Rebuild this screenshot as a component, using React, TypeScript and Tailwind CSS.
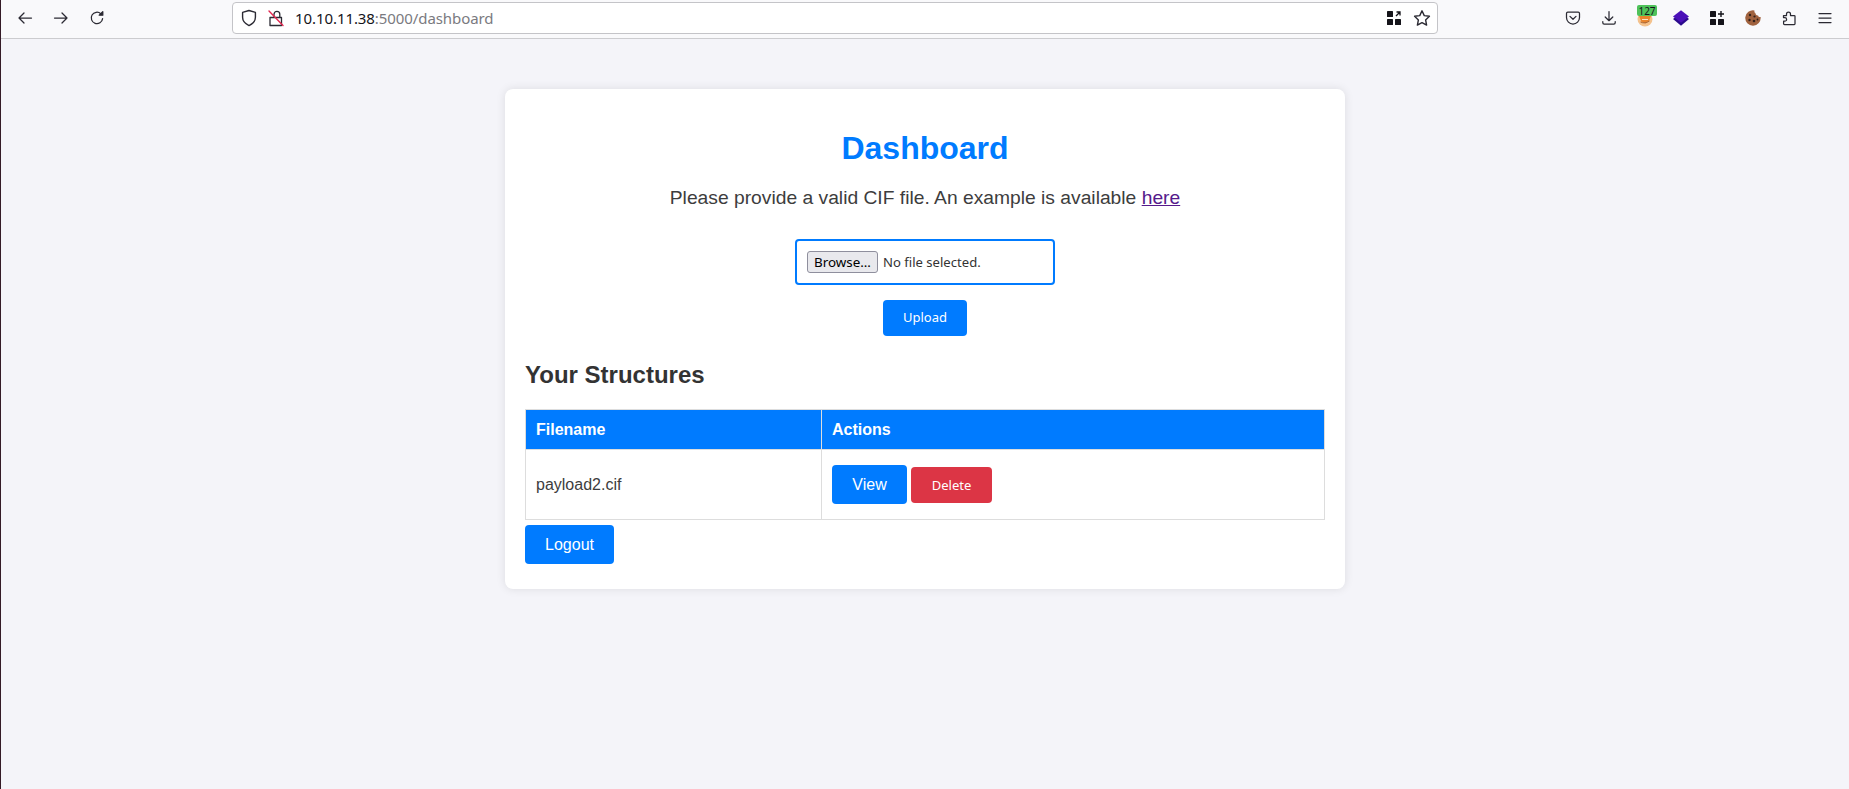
const ui = "font-['Noto_Sans','Open_Sans',sans-serif]";

function Stroke({ children, size = 16 }: { children: React.ReactNode; size?: number }) {
  return (
    <svg width={size} height={size} viewBox="0 0 16 16" fill="none" stroke="#2b2a33" strokeWidth="1.25" strokeLinecap="round" strokeLinejoin="round">
      {children}
    </svg>
  );
}

function Slot({ children }: { children: React.ReactNode }) {
  return <div className="flex h-[36px] w-[36px] shrink-0 items-center justify-center">{children}</div>;
}

function Toolbar() {
  return (
    <div className="flex h-[39px] shrink-0 items-center border-b border-[#cccccf] bg-[#f9f9fb] pb-[2px]">
      <div className="ml-[6px] flex">
        <Slot><Stroke><path d="M14.5 8H2M7 3 2 8l5 5" /></Stroke></Slot>
        <Slot><Stroke><path d="M1.5 8H14M9 3l5 5-5 5" /></Stroke></Slot>
        <Slot>
          <Stroke>
            <path d="M13.6 8.6A5.7 5.7 0 1 1 11.8 3.7" />
            <path d="M13.8 1.6v3.6h-3.6z" fill="#2b2a33" />
          </Stroke>
        </Slot>
      </div>
      <div className="ml-[117px] flex h-[32px] w-[1206px] shrink-0 items-center rounded-[4px] border border-[#c4c4c8] bg-white">
        <div className="ml-[7px] flex w-[18px] justify-center">
          <Stroke size={18}><path d="M8 1.3 2.3 3v4.4c0 3.3 2.500 5.900 5.700 7.300 3.200-1.400 5.700-4 5.700-7.300V3z" /></Stroke>
        </div>
        <div className="ml-[9px] flex w-[18px] justify-center">
          <svg width="18" height="18" viewBox="0 0 18 18" fill="none" strokeLinecap="round">
            <path d="M7 8.500V5.200a2.900 2.900 0 0 1 5.800 0v3.300M3 8.500h11.500v8H3z" stroke="#2b2a33" strokeWidth="1.300" strokeLinejoin="round" />
            <path d="M2 2 16 16.500" stroke="#e22850" strokeWidth="1.400" />
          </svg>
        </div>
        <div className={`${ui} ml-[10px] text-[15px] leading-none tracking-[-0.08px] text-[#7a7a80]`}>
          <span className="text-[#15141a]">10.10.11.38</span>:5000/dashboard
        </div>
        <div className="ml-auto mr-[6px] flex items-center gap-[12px]">
          <svg width="14" height="14" viewBox="0 0 14 14" fill="#15141a">
            <rect x="0" y="0" width="6" height="6" rx="0.6" />
            <rect x="0" y="8" width="6" height="6" rx="0.6" />
            <rect x="8" y="8" width="6" height="6" rx="0.6" />
            <path d="M9 5 13 1M9.500 1H13v3.500" stroke="#15141a" strokeWidth="1.300" fill="none" />
          </svg>
          <Stroke size={18}><path d="m8 1.600 2 4.300 4.600.6-3.400 3.200.9 4.600L8 12.100l-4.100 2.200.9-4.600L1.400 6.500 6 5.900z" /></Stroke>
        </div>
      </div>
      <div className="ml-auto mr-[6px] flex">
        <Slot>
          <Stroke>
            <path d="M2.800 2.200h10.400c.8 0 1.300.6 1.300 1.300v4a6.500 6.500 0 0 1-13 0v-4c0-.7.5-1.300 1.300-1.300z" />
            <path d="m5 6.400 3 2.900 3-2.900" />
          </Stroke>
        </Slot>
        <Slot>
          <Stroke>
            <path d="M8 1.500v9M4.200 7 8 10.700 11.800 7M1.800 11.500v1.300c0 .8.6 1.400 1.400 1.400h9.600c.8 0 1.400-.6 1.400-1.400v-1.300" />
          </Stroke>
        </Slot>
        <Slot>
          <div className="relative h-[16px] w-[16px]">
            <svg width="16" height="16" viewBox="0 0 16 16" className="absolute left-0 top-[1px]">
              <circle cx="8" cy="8" r="7.500" fill="#f4c28d" />
              <path d="M2 5h12l-2 5-3.500 2.500L4.500 11z" fill="#e8842c" />
              <path d="M3.500 11c3 1.500 6 1 9-1" stroke="#a9683a" strokeWidth="1" fill="none" />
              <path d="M5 8.500h6" stroke="#fbe3c6" strokeWidth="1" />
            </svg>
            <span className={`${ui} absolute left-0 top-[-5px] flex h-[11px] w-[20px] items-center justify-center rounded-[2px] bg-[#4fc25a] text-[10px] leading-none text-[#15141a]`}>
              127
            </span>
          </div>
        </Slot>
        <Slot>
          <svg width="16" height="16" viewBox="0 0 16 16">
            <path d="M0 9 8 15.800 16 9 8 3z" fill="#2a0a8c" />
            <path d="M0 6.500 8 0.300l8 6.200-8 6.300z" fill="#4b10b8" />
          </svg>
        </Slot>
        <Slot>
          <svg width="14" height="14" viewBox="0 0 14 14" fill="#15141a">
            <rect x="0" y="0" width="6" height="6" rx="0.6" />
            <rect x="0" y="8" width="6" height="6" rx="0.6" />
            <rect x="8" y="8" width="6" height="6" rx="0.6" />
            <path d="M10.300 0h1.400v2.300H14v1.400h-2.300V6h-1.400V3.700H8V2.300h2.300z" />
          </svg>
        </Slot>
        <Slot>
          <svg width="16" height="16" viewBox="0 0 16 16">
            <path d="M9.500.4A7.700 7.700 0 1 0 15.600 7c-1.200.3-2.300-.4-2.500-1.600-1.400.2-2.700-.8-2.700-2.300C9.500 2.800 9.200 1.500 9.500.4z" fill="#a0623e" />
            <circle cx="5" cy="5" r="1.200" fill="#33211a" />
            <circle cx="9.500" cy="6.500" r="1.100" fill="#33211a" />
            <circle cx="4.500" cy="10" r="1.200" fill="#33211a" />
            <circle cx="9" cy="11" r="1.300" fill="#33211a" />
            <circle cx="12.500" cy="9.500" r="0.900" fill="#33211a" />
          </svg>
        </Slot>
        <Slot>
          <Stroke>
            <path d="M2.500 5.500h3V4.200a2 2 0 0 1 4 0v1.300h3.700c.5 0 .8.400.8.800v7.400c0 .500-.4.800-.8.800H3.500c-.5 0-.9-.4-.9-.8v-2.500h1.200a1.800 1.800 0 0 0 0-3.600H2.500z" />
          </Stroke>
        </Slot>
        <Slot>
          <Stroke><path d="M2 3.500h12M2 8h12M2 12.500h12" /></Stroke>
        </Slot>
      </div>
    </div>
  );
}

export default function App() {
  return (
    <div className="flex h-screen overflow-hidden bg-[#f4f4f9] font-['Liberation_Sans',Arial,sans-serif] text-[#333333]">
      <div className="w-px shrink-0 bg-[#341a26]" />
      <div className="flex min-w-0 flex-1 flex-col">
        <Toolbar />
        <div className="flex justify-center">
          <div className="mt-[50px] w-[840px] rounded-[8px] bg-white p-[20px] shadow-[0_0_10px_rgba(0,0,0,0.1)]">
            <h1 className="mt-[21px] text-center text-[32px] leading-[37px] font-bold text-[#007bff]">Dashboard</h1>
            <p className="mt-[20px] text-center text-[19.25px] leading-[22px] text-[#3d3d3d]">
              Please provide a valid CIF file. An example is available{" "}
              <a href="#" className="text-[#551a8b] underline">here</a>
            </p>
            <div className={`${ui} mt-[30px] flex flex-col items-center`}>
              <div className="flex h-[46px] w-[260px] items-center rounded-[4px] border-2 border-[#007bff] bg-white px-[10px]">
                <span className="flex h-[22px] w-[71px] items-center justify-center rounded-[3px] border border-[#8f8f9d] bg-[#e9e9ed] pt-[1px] text-[13.4px] text-black">
                  Browse…
                </span>
                <span className="ml-[5px] pt-[1px] text-[13.1px] text-[#333333]">No file selected.</span>
              </div>
              <button className="mt-[15px] h-[36px] w-[84px] rounded-[4px] bg-[#007bff] text-[13px] text-white">Upload</button>
            </div>
            <h2 className="mt-[25px] text-[24px] leading-[28px] font-bold">Your Structures</h2>
            <table className="mt-[20px] w-[800px] table-fixed border-collapse">
              <thead>
                <tr className="bg-[#007bff] text-white">
                  <th className="w-[296px] border border-[#dddddd] p-[10px] text-left text-[16px] leading-[19px] font-bold">Filename</th>
                  <th className="border border-[#dddddd] p-[10px] text-left text-[16px] leading-[19px] font-bold">Actions</th>
                </tr>
              </thead>
              <tbody>
                <tr>
                  <td className="h-[70px] border border-[#dddddd] px-[10px] text-[16px] text-[#3d3d3d]">payload2.cif</td>
                  <td className="h-[70px] border border-[#dddddd] px-[10px]">
                    <div className="flex items-baseline gap-[4px]">
                      <button className="h-[39px] w-[75px] rounded-[4px] bg-[#007bff] text-[16px] text-white">View</button>
                      <button className={`${ui} h-[36px] w-[81px] rounded-[4px] bg-[#dc3545] text-[13px] text-white`}>Delete</button>
                    </div>
                  </td>
                </tr>
              </tbody>
            </table>
            <button className="mt-[5px] mb-[5px] block h-[39px] w-[89px] rounded-[4px] bg-[#007bff] text-[16px] text-white">Logout</button>
          </div>
        </div>
      </div>
    </div>
  );
}
